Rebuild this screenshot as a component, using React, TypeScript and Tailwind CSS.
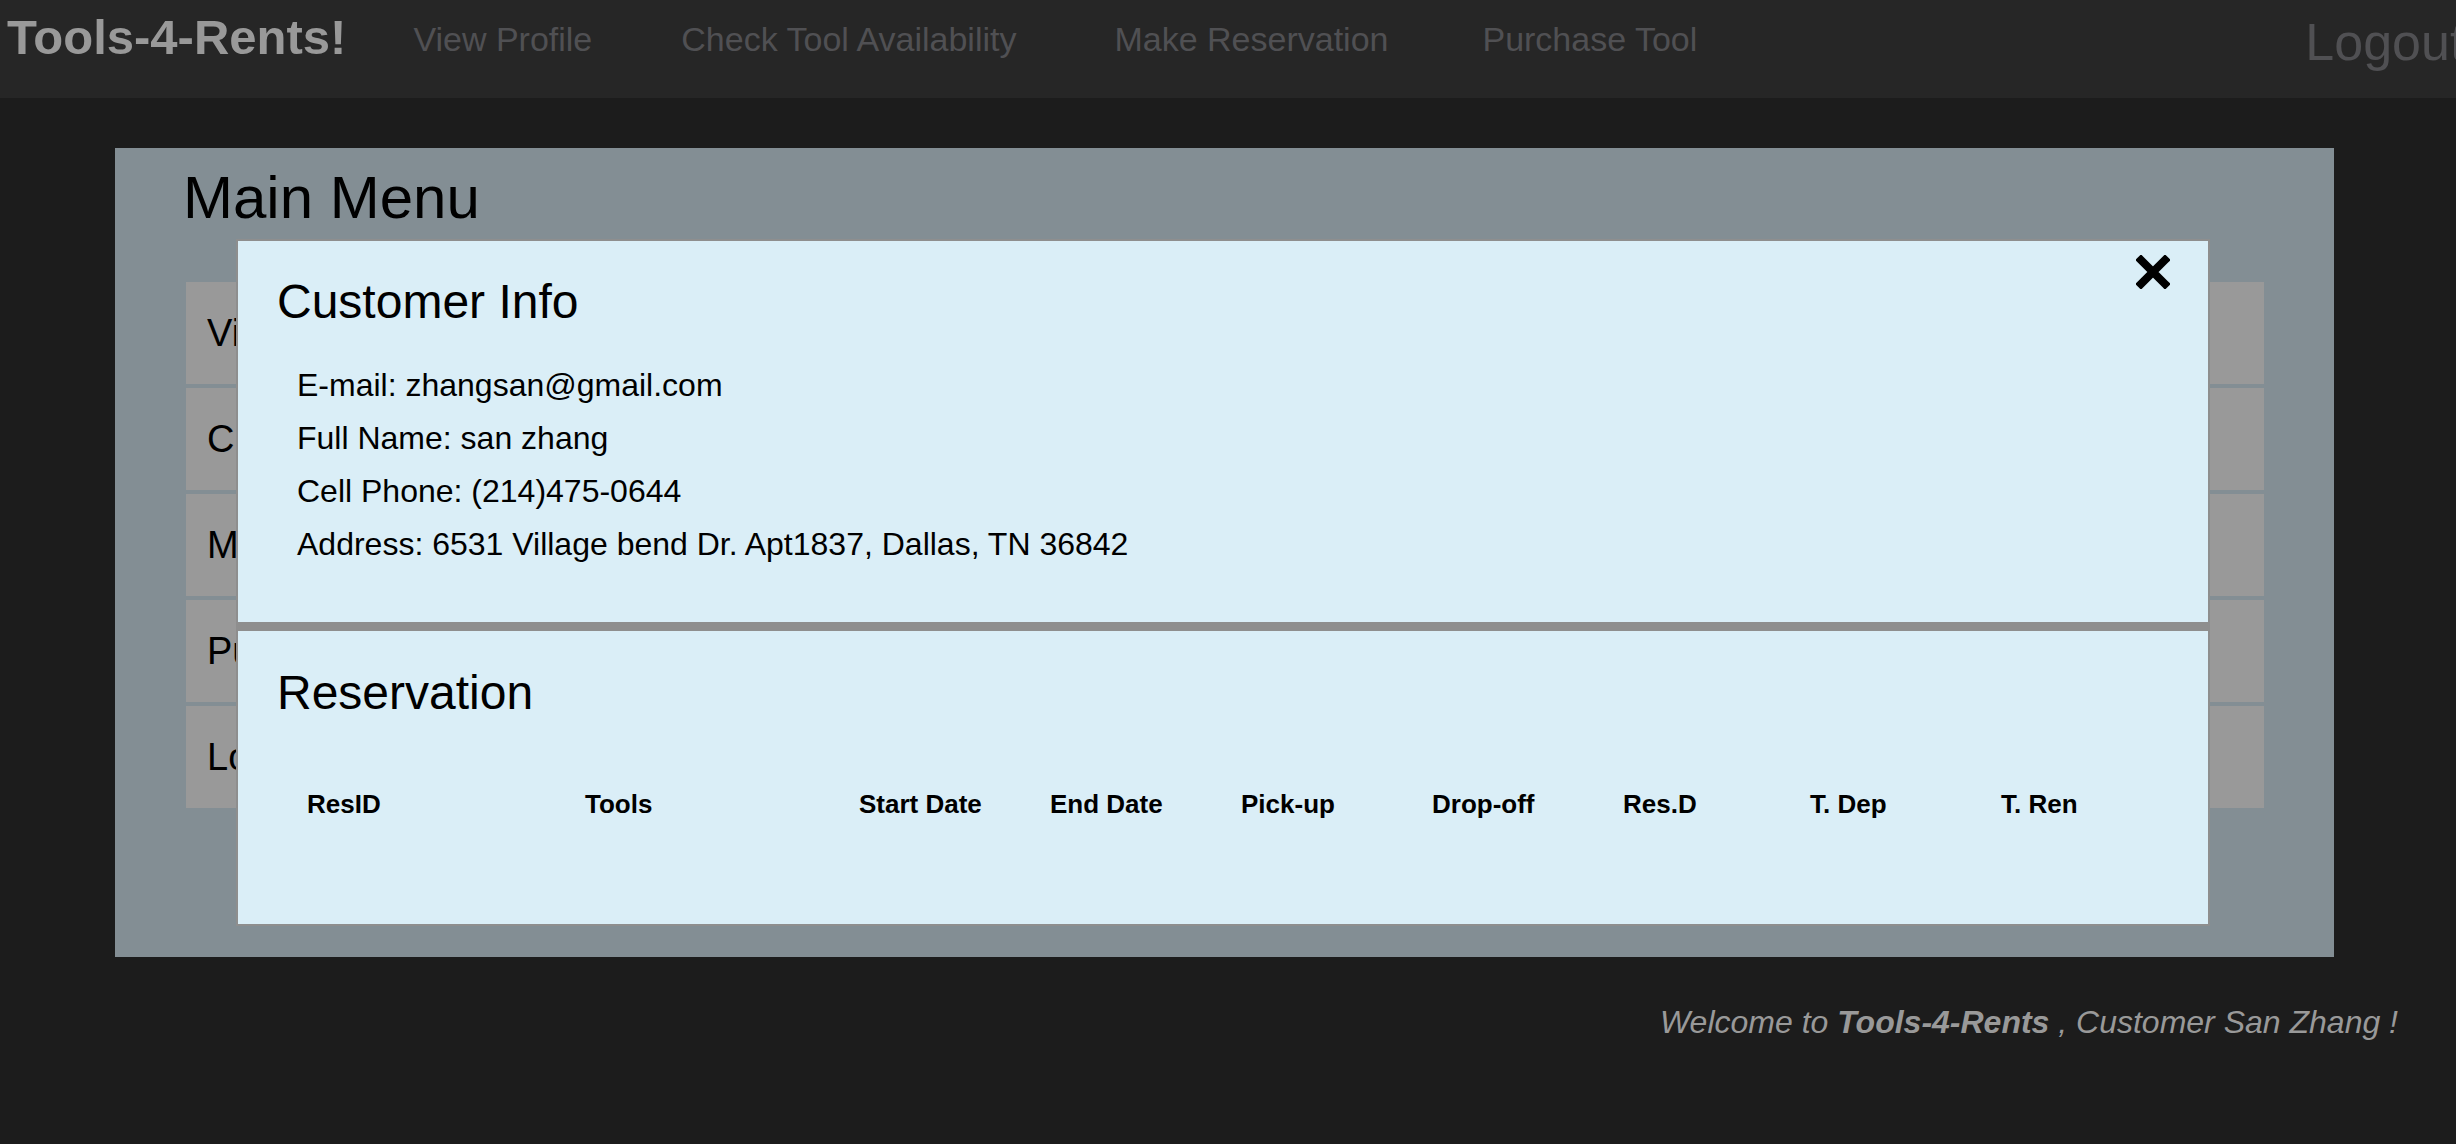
import React from "react";

const menuItems = [
  "View Profile",
  "Check Tool Availability",
  "Make Reservation",
  "Purchase Tool",
  "Logout",
];

const headers = [
  "ResID",
  "Tools",
  "Start Date",
  "End Date",
  "Pick-up",
  "Drop-off",
  "Res.D",
  "T. Dep",
  "T. Ren",
];

function CloseIcon() {
  return (
    <svg width="34" height="34" viewBox="0 0 34 34" aria-hidden="true">
      <path d="M5 5 L29 29 M29 5 L5 29" stroke="#000" strokeWidth="8" strokeLinecap="square" fill="none" />
    </svg>
  );
}

export default function App() {
  return (
    <div className="w-[2456px] h-[1144px] overflow-hidden bg-[#1c1c1c] font-['Liberation_Sans',Arial,Helvetica,sans-serif]">
      {/* Navbar */}
      <nav className="h-[98px] bg-[#262626] flex items-start whitespace-nowrap overflow-hidden">
        <span className="shrink-0 pl-[7px] pt-[13px] text-[49px] leading-none font-bold text-[#999999]">
          Tools-4-Rents!
        </span>
        <a className="shrink-0 ml-[67px] pt-[22px] text-[34px] leading-none text-[#505053]">View Profile</a>
        <a className="shrink-0 ml-[89px] pt-[22px] text-[34px] leading-none text-[#505053]">Check Tool Availability</a>
        <a className="shrink-0 ml-[98px] pt-[22px] text-[34px] leading-none text-[#505053]">Make Reservation</a>
        <a className="shrink-0 ml-[94px] pt-[22px] text-[34px] leading-none text-[#505053]">Purchase Tool</a>
        <a className="shrink-0 ml-[608px] pt-[16px] text-[52px] leading-none text-[#505053]">Logout</a>
      </nav>

      {/* Main panel */}
      <div className="relative ml-[115px] mt-[50px] w-[2219px] h-[809px] bg-[#838e94]">
        <h1 className="pl-[68px] pt-[20px] text-[60px] leading-none text-black">Main Menu</h1>
        <div className="mt-[54px] ml-[71px] mr-[70px] flex flex-col gap-[4px]">
          {menuItems.map((m) => (
            <div key={m} className="h-[102px] bg-[#999999] flex items-center pl-[21px] text-[38px] text-black">
              {m}
            </div>
          ))}
        </div>

        {/* Modal overlay */}
        <div className="absolute left-[121px] top-[91px] w-[1974px] h-[687px] bg-[#8e8e8e] p-[2px] flex flex-col gap-[9px]">
          <div className="relative h-[381px] bg-[#daeef7] pl-[39px] pt-[37px]">
            <h2 className="text-[48px] leading-none text-black">Customer Info</h2>
            <div className="mt-[33px] pl-[20px] text-[32px] leading-[53px] text-black">
              <div>E-mail: zhangsan@gmail.com</div>
              <div>Full Name: san zhang</div>
              <div>Cell Phone: (214)475-0644</div>
              <div>Address: 6531 Village bend Dr. Apt1837, Dallas, TN 36842</div>
            </div>
            <button className="absolute right-[38px] top-[14px]">
              <CloseIcon />
            </button>
          </div>
          <div className="flex-1 bg-[#daeef7] pl-[39px] pt-[38px]">
            <h2 className="text-[48px] leading-none text-black">Reservation</h2>
            <div className="mt-[74px] ml-[30px] grid grid-cols-[278px_274px_191px_191px_191px_191px_187px_191px_1fr] text-[26px] leading-none font-bold text-black">
              {headers.map((h) => (
                <div key={h}>{h}</div>
              ))}
            </div>
          </div>
        </div>
      </div>

      {/* Footer */}
      <div className="mt-[49px] pr-[58px] text-right text-[32px] leading-none italic text-[#999999]">
        Welcome to <span className="font-bold">Tools-4-Rents</span> , Customer San Zhang !
      </div>
    </div>
  );
}
